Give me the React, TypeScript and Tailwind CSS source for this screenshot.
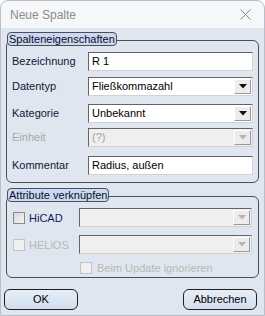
const font = "font-['Liberation_Sans',Arial,sans-serif]";

function Arrow({ disabled }: { disabled?: boolean }) {
  return (
    <div className="flex h-full w-[17px] items-center justify-center border border-t-white border-l-white border-b-[#9a9a9a] border-r-[#9a9a9a] bg-[#ececec]">
      <svg width="8" height="5" viewBox="0 0 8 5">
        <path d="M0 0h8L4 4.5z" fill={disabled ? "#b4b4b4" : "#111"} />
      </svg>
    </div>
  );
}

function Field({ value, select, disabled }: { value: string; select?: boolean; disabled?: boolean }) {
  return (
    <div
      className={`flex h-[19px] flex-1 items-center border border-t-[#646464] border-l-[#646464] border-b-[#d2d2d2] border-r-[#d2d2d2] ${
        disabled ? "bg-[#efefef] text-[#a2a2a2]" : "bg-white text-black"
      }`}
    >
      <span className="flex-1 pl-[3px] text-[11px] leading-none">{value}</span>
      {select && <div className="h-full py-[1px] pr-[1px]"><Arrow disabled={disabled} /></div>}
    </div>
  );
}

function Row({ label, children, disabled, mt }: { label: string; children: React.ReactNode; disabled?: boolean; mt: string }) {
  return (
    <div className={`flex items-center ${mt}`}>
      <span className={`w-[76px] text-[11px] leading-none ${disabled ? "text-[#a8a8a8]" : "text-[#10173a]"}`}>{label}</span>
      {children}
    </div>
  );
}

function Legend({ text }: { text: string }) {
  return (
    <div className="relative z-10 ml-[1px] w-fit rounded-[4px] border border-[#4a4f5a] bg-[#c9d9ef] px-[1px] text-[11px] leading-[12px] text-[#0d0d2a]">
      {text}
    </div>
  );
}

function Check({ disabled }: { disabled?: boolean }) {
  return (
    <div
      className={`h-[12px] w-[12px] border ${
        disabled ? "border-[#c4c4c4] bg-[#f0f0f0]" : "border-[#8a8a8a] bg-gradient-to-br from-[#d8d8d8] to-[#f4f4f4]"
      }`}
    />
  );
}

function Button({ text }: { text: string }) {
  return (
    <div className="flex h-[21px] w-[74px] items-center justify-center rounded-[6px] border border-[#202020] bg-gradient-to-b from-[#e6eef8] to-[#d2dff0] text-[11px] text-black">
      {text}
    </div>
  );
}

export default function App() {
  return (
    <div className={`${font} h-[316px] w-[265px] overflow-hidden rounded-t-[8px] border border-[#b9bfc8] bg-[#f6f7f9]`}>
      <div className="flex h-[27px] items-center justify-between pl-[9px] pr-[13px]">
        <span className="text-[12px] text-[#8c8c8c]">Neue Spalte</span>
        <svg width="11" height="11" viewBox="0 0 11 11">
          <path d="M0.5 0.5l10 10M10.5 0.5l-10 10" stroke="#888" strokeWidth="1" />
        </svg>
      </div>
      <div className="flex h-[288px] flex-col bg-[#dfe6ef] px-[5px] pt-[4px]">
        <Legend text="Spalteneigenschaften" />
        <div className="-mt-[6px] flex h-[143px] flex-col rounded-[6px] border border-[#4a4f5a] pl-[5px] pr-[5px] pt-[11px]">
          <Row label="Bezeichnung" mt="mt-0">
            <Field value="R 1" />
          </Row>
          <Row label="Datentyp" mt="mt-[6px]">
            <Field value="Fließkommazahl" select />
          </Row>
          <Row label="Kategorie" mt="mt-[8px]">
            <Field value="Unbekannt" select />
          </Row>
          <Row label="Einheit" mt="mt-[5px]" disabled>
            <Field value="(?)" select disabled />
          </Row>
          <Row label="Kommentar" mt="mt-[9px]">
            <Field value="Radius, außen" />
          </Row>
        </div>
        <div className="mt-[5px]">
          <Legend text="Attribute verknüpfen" />
        </div>
        <div className="-mt-[6px] flex h-[82px] flex-col rounded-[6px] border border-[#4a4f5a] pl-[6px] pr-[6px] pt-[11px]">
          <div className="flex items-center">
            <div className="flex w-[66px] items-center gap-[4px]">
              <Check />
              <span className="text-[11px] text-[#111a5a]">HiCAD</span>
            </div>
            <div className="flex h-[20px] flex-1">
              <Field value="" select disabled />
            </div>
          </div>
          <div className="mt-[7px] flex items-center">
            <div className="flex w-[66px] items-center gap-[4px]">
              <Check disabled />
              <span className="text-[11px] text-[#b8b8b8]">HELiOS</span>
            </div>
            <div className="flex h-[20px] flex-1">
              <Field value="" select disabled />
            </div>
          </div>
          <div className="mt-[5px] flex items-center gap-[5px] pl-[67px]">
            <Check disabled />
            <span className="text-[11px] text-[#b8b8b8]">Beim Update ignorieren</span>
          </div>
        </div>
        <div className="-ml-[2px] mt-[11px] flex justify-between pr-[2px]">
          <Button text="OK" />
          <Button text="Abbrechen" />
        </div>
      </div>
    </div>
  );
}
